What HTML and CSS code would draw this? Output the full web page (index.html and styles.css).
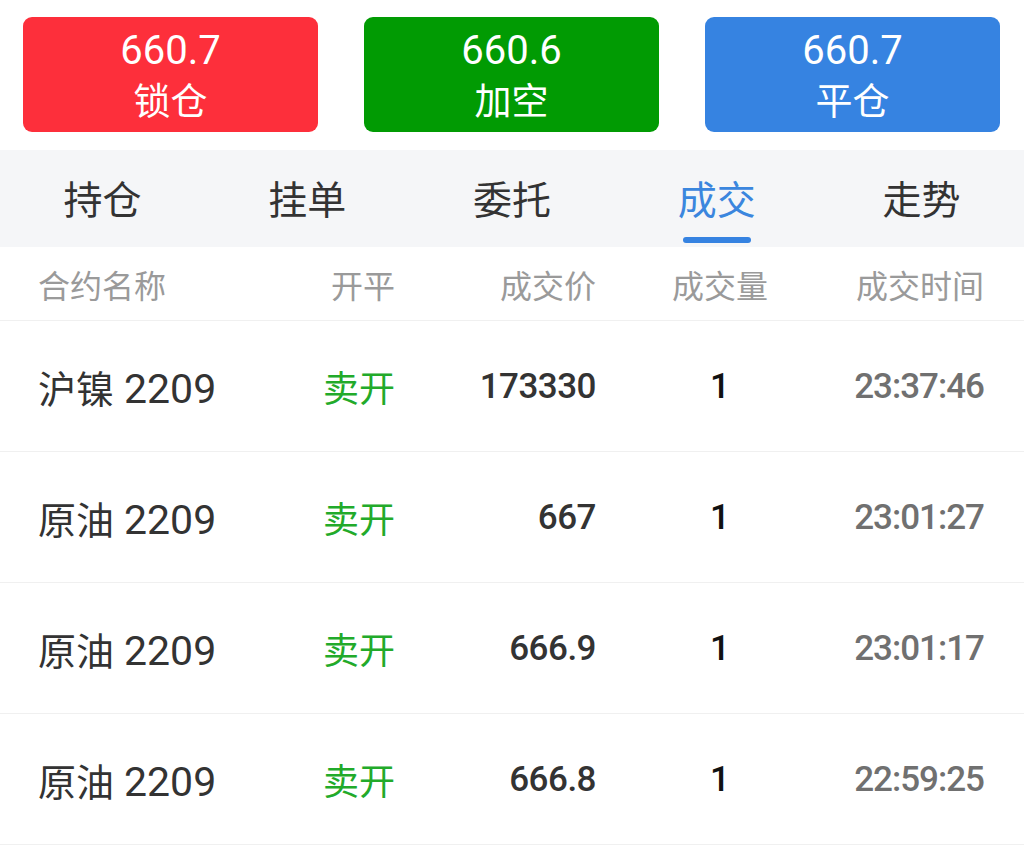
FILE: index.html
```html
<!DOCTYPE html>
<html lang="zh-CN">
<head>
<meta charset="utf-8">
<title>成交</title>
<link rel="stylesheet" href="styles.css">
</head>
<body>
<div class="page">
  <div class="actions">
    <button class="act act-red"><span class="act-price">660.7</span><span class="act-label">锁仓</span></button>
    <button class="act act-green"><span class="act-price">660.6</span><span class="act-label">加空</span></button>
    <button class="act act-blue"><span class="act-price">660.7</span><span class="act-label">平仓</span></button>
  </div>

  <nav class="tabs">
    <div class="tab"><span class="tab-text">持仓</span><span class="tab-bar"></span></div>
    <div class="tab"><span class="tab-text">挂单</span><span class="tab-bar"></span></div>
    <div class="tab"><span class="tab-text">委托</span><span class="tab-bar"></span></div>
    <div class="tab tab-active"><span class="tab-text">成交</span><span class="tab-bar"></span></div>
    <div class="tab"><span class="tab-text">走势</span><span class="tab-bar"></span></div>
  </nav>

  <div class="table">
    <div class="row head">
      <div class="c-name">合约名称</div>
      <div class="c-side">开平</div>
      <div class="c-price">成交价</div>
      <div class="c-qty">成交量</div>
      <div class="c-time">成交时间</div>
    </div>
    <div class="row">
      <div class="c-name">沪镍<span class="code">2209</span></div>
      <div class="c-side sell">卖开</div>
      <div class="c-price num">173330</div>
      <div class="c-qty num">1</div>
      <div class="c-time num">23:37:46</div>
    </div>
    <div class="row">
      <div class="c-name">原油<span class="code">2209</span></div>
      <div class="c-side sell">卖开</div>
      <div class="c-price num">667</div>
      <div class="c-qty num">1</div>
      <div class="c-time num">23:01:27</div>
    </div>
    <div class="row">
      <div class="c-name">原油<span class="code">2209</span></div>
      <div class="c-side sell">卖开</div>
      <div class="c-price num">666.9</div>
      <div class="c-qty num">1</div>
      <div class="c-time num">23:01:17</div>
    </div>
    <div class="row">
      <div class="c-name">原油<span class="code">2209</span></div>
      <div class="c-side sell">卖开</div>
      <div class="c-price num">666.8</div>
      <div class="c-qty num">1</div>
      <div class="c-time num">22:59:25</div>
    </div>
  </div>
</div>
</body>
</html>
```
FILE: styles.css
```css
* {
  box-sizing: border-box;
}

html, body {
  margin: 0;
  padding: 0;
  background: #ffffff;
}

body {
  font-family: "Noto Sans CJK SC", "Noto Sans", sans-serif;
  color: #333333;
}

.page {
  width: 1024px;
  height: 863px;
  overflow: hidden;
  background: #ffffff;
}

/* Quick-order buttons */
.actions {
  display: grid;
  grid-template-columns: repeat(3, 1fr);
  column-gap: 46px;
  padding: 17px 24px 18px 23px;
}

.act {
  height: 115px;
  border: none;
  border-radius: 9px;
  color: #ffffff;
  display: flex;
  flex-direction: column;
  align-items: center;
  justify-content: center;
  padding: 0;
  font-family: "Noto Sans CJK SC", "Noto Sans", sans-serif;
}

.act-red { background: #fd2f3b; }
.act-green { background: #019b03; }
.act-blue { background: #3683e1; }

.act-price {
  font-family: "Roboto", "Noto Sans", sans-serif;
  font-size: 40px;
  line-height: 48px;
}

.act-label {
  font-size: 37px;
  line-height: 48px;
}

/* Tab strip */
.tabs {
  display: grid;
  grid-template-columns: repeat(5, 1fr);
  height: 97px;
  background: #f5f6f8;
}

.tab {
  display: flex;
  flex-direction: column;
  align-items: center;
  padding-top: 21px;
}

.tab-text {
  font-size: 39px;
  line-height: 52px;
  color: #333333;
}

.tab-bar {
  width: 68px;
  height: 6px;
  margin-top: 14px;
  border-radius: 3px;
  background: transparent;
}

.tab-active .tab-text { color: #3b86de; }
.tab-active .tab-bar { background: #3683e1; }

/* Trade list */
.row {
  display: grid;
  grid-template-columns: 222px 135px 201px 248px 1fr;
  align-items: center;
  padding: 0 40px 0 38px;
  height: 131px;
  border-bottom: 1px solid #f0f0f0;
}

.row.head {
  height: 74px;
}

.c-name {
  text-align: left;
  font-size: 38px;
  color: #333333;
  white-space: nowrap;
}

.head .c-name,
.head .c-side,
.head .c-price,
.head .c-qty,
.head .c-time {
  font-size: 32px;
  color: #9a9a9a;
  font-weight: 400;
  letter-spacing: 0;
}

.code {
  font-family: "Roboto", "Noto Sans", sans-serif;
  font-size: 41px;
  margin-left: 10px;
}

.c-side { text-align: right; }
.c-price { text-align: right; }
.c-qty { text-align: center; }
.c-time { text-align: right; }

.sell {
  color: #22aa2a;
  font-size: 36px;
}

.num {
  font-family: "Roboto", "Noto Sans", sans-serif;
  font-weight: 500;
  font-size: 35px;
}

.c-price.num { color: #333333; letter-spacing: -0.5px; }
.c-qty.num { color: #111111; }
.c-time.num { color: #707070; letter-spacing: -1px; }
```
